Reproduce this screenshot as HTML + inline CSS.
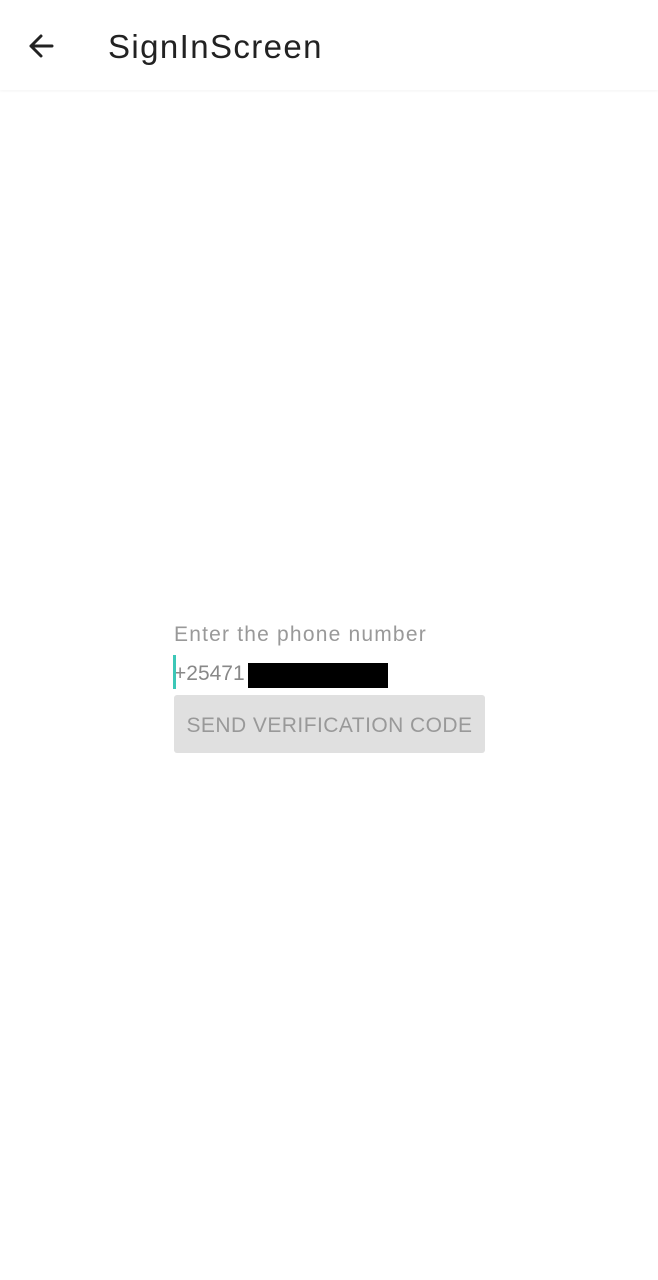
<!DOCTYPE html>
<html><head><style>
html,body{margin:0;padding:0;width:658px;height:1280px;background:#fff;overflow:hidden;font-family:"Liberation Sans",sans-serif;}
.bar{position:absolute;left:0;top:0;width:658px;height:90px;background:#fff;box-shadow:0 1px 3px rgba(0,0,0,0.05);}
.title{position:absolute;left:108px;top:28px;font-size:33px;color:#222;font-family:"Comic Sans MS","Liberation Sans",sans-serif;letter-spacing:1.4px;}
.label{position:absolute;left:174px;top:623px;font-size:21px;color:#999;letter-spacing:1.2px;}
.input{position:absolute;left:174px;top:662px;font-size:21px;color:#888;}
.cursor{position:absolute;left:173px;top:655px;width:3px;height:34px;background:#3cc7b7;}
.redact{position:absolute;left:248px;top:663px;width:140px;height:25px;background:#000;}
.btn{position:absolute;left:174px;top:695px;width:311px;height:58px;background:#e0e0e0;border-radius:3px;color:#999;font-size:21px;line-height:62px;text-align:center;letter-spacing:0.45px;}
</style></head><body>
<div class="bar"></div>
<svg style="position:absolute;left:26px;top:31px" width="30" height="30" viewBox="0 0 30 30"><path d="M26 15H5M15 5L5 15L15 25" stroke="#222" stroke-width="3" fill="none" stroke-linecap="round" stroke-linejoin="round"/></svg>
<div class="title">SignInScreen</div>
<div class="label">Enter the phone number</div>
<div class="input">+25471</div>
<div class="cursor"></div>
<div class="redact"></div>
<div class="btn">SEND VERIFICATION CODE</div>
</body></html>
